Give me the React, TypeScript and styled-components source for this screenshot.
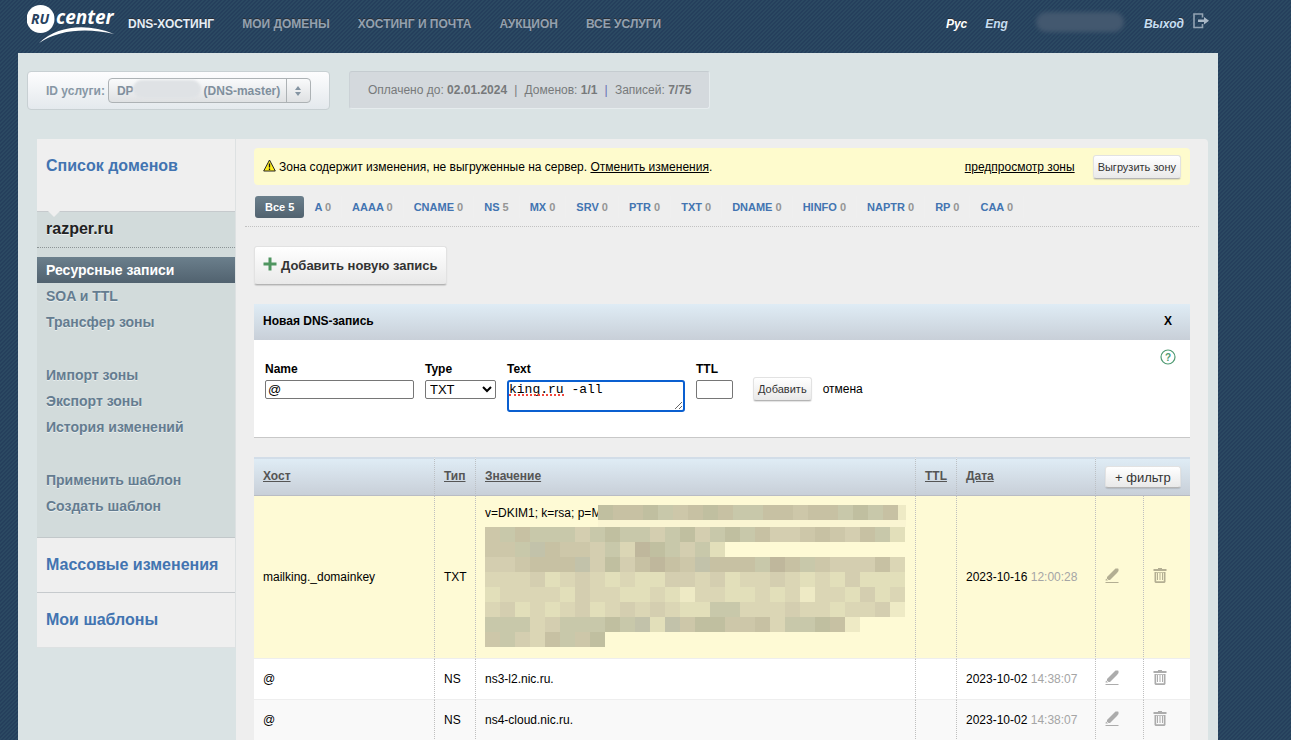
import React from "react";
import styled, { createGlobalStyle, css } from "styled-components";

const GlobalStyle = createGlobalStyle`
  * { box-sizing: border-box; }
  body {
    margin: 0;
    font: 12px/16px "Liberation Sans", Arial, sans-serif;
    color: #000;
    background-color: #27425f;
    background-image: linear-gradient(135deg, #253f5c 25%, #2b4962 25% 50%, #253f5c 50% 75%, #2b4962 75%);
    background-size: 4px 4px;
  }
  a { color: inherit; }
  button, input, select { font-family: inherit; }
`;

/* ---------- header ---------- */

const Shell = styled.div`
  margin: 0 73px 0 18px;
`;

const Header = styled.header`
  display: flex;
  height: 53px;
  padding: 0 8px 0 9px;
`;

const LogoLink = styled.a`
  display: block;
  width: 101px;
  height: 46px;
`;

const NavList = styled.nav`
  display: flex;
  gap: 28px;
  padding-top: 16px;
  flex: 1;
`;

const NavLink = styled.a<{ $active?: boolean }>`
  height: 16px;
  white-space: nowrap;
  font-weight: bold;
  text-decoration: none;
  text-shadow: 0 -1px 0 #2a2f36;
  color: ${(p) => (p.$active ? "#e4eef7" : "#93a1b0")};
`;

const UserBar = styled.div`
  display: flex;
  padding-top: 16px;
  font-style: italic;
`;

const UserLink = styled.a<{ $current?: boolean }>`
  height: 16px;
  margin-right: 18px;
  white-space: nowrap;
  font-weight: bold;
  text-decoration: none;
  text-shadow: 0 -1px 0 #2a2f36;
  color: ${(p) => (p.$current ? "#fff" : "#c5def2")};
`;

const HiddenLogin = styled.span`
  width: 88px;
  height: 20px;
  margin: -4px 20px 0 10px;
  border-radius: 10px;
  background: #43586f;
  filter: blur(2px);
`;

const ExitLink = styled.a`
  display: flex;
  height: 16px;
  gap: 9px;
  font-weight: bold;
  text-decoration: none;
  text-shadow: 0 -1px 0 #2a2f36;
  color: #c5def2;
  svg { margin-top: -3px; }
`;

/* ---------- service bar ---------- */

const Page = styled.div`
  min-height: calc(100vh - 53px);
  padding: 18px 10px 0 9px;
  background: #dae3e4;
`;

const ServiceBar = styled.div`
  display: flex;
  align-items: flex-start;
  gap: 19px;
  height: 68px;
`;

const ServiceBox = styled.div`
  display: flex;
  align-items: center;
  height: 39px;
  padding: 0 18px;
  border: 1px solid #c8d0d3;
  border-radius: 4px;
  background: linear-gradient(#fdfdfe, #e4e9ed);
`;

const ServiceLabel = styled.label`
  margin-right: 3px;
  font-weight: bold;
  color: #8797a5;
`;

const SelectFrame = styled.span`
  position: relative;
  display: block;
`;

const ServiceSelect = styled.select`
  display: block;
  appearance: none;
  width: 203px;
  height: 25px;
  padding: 0 26px 0 8px;
  border: 1px solid #adb2b5;
  border-radius: 4px;
  background: linear-gradient(#f9fafb, #dfe1e3);
  font-size: 12px;
  font-weight: bold;
  color: #7f8f9d;
`;

const SelectSmudge = styled.span`
  position: absolute;
  left: 25px;
  top: 2px;
  width: 68px;
  height: 18px;
  border-radius: 9px;
  background: #dfe2e5;
  filter: blur(1px);
  pointer-events: none;
`;

const SelectArrows = styled.svg`
  position: absolute;
  right: 1px;
  top: 1px;
  pointer-events: none;
`;

const ServiceInfo = styled.div`
  height: 38px;
  padding: 10px 18px;
  border: 1px solid #e6ecee;
  border-top-color: #c5ccd0;
  border-left-color: #cbd2d6;
  border-radius: 3px;
  background: #d4d9dd;
  color: #77797b;
  white-space: nowrap;
`;

const Divider = styled.span<{ $blue?: boolean }>`
  margin: 0 4px 0 7px;
  color: ${(p) => (p.$blue ? "#6a6cb4" : "#77797b")};
`;

/* ---------- sidebar ---------- */

const Columns = styled.div`
  display: flex;
  align-items: stretch;
`;

const Sidebar = styled.aside`
  flex: 0 0 199px;
  align-self: flex-start;
  margin-left: 10px;
  border: solid #dde1e2;
  border-width: 0 1px 1px 0;
`;

const SideTitle = styled.a<{ $tall?: boolean }>`
  position: relative;
  display: block;
  height: ${(p) => (p.$tall ? "73px" : "55px")};
  padding: 17px 9px;
  border-bottom: 1px solid #c6cacd;
  background: #efefef;
  font-size: 16px;
  line-height: 20px;
  font-weight: bold;
  text-decoration: none;
  white-space: nowrap;
  color: #4274b1;
  &:last-child { height: 54px; border-bottom: 0; }
`;

const Notch = styled.i`
  position: absolute;
  left: 11px;
  bottom: -6px;
  border: 6px solid transparent;
  border-top-color: #efefef;
  border-bottom: 0;
`;

const DomainBlock = styled.div`
  height: 326px;
  background: #d2dbdb;
  border-bottom: 1px solid #c2c8ca;
`;

const DomainName = styled.h2`
  height: 36px;
  margin: 0 0 9px;
  padding: 7px 9px;
  border-bottom: 1px dotted #8c9496;
  font-size: 16px;
  line-height: 20px;
  color: #222;
  text-shadow: 0 1px 0 #eef2f2;
`;

const MenuGroup = styled.ul`
  margin: 0 0 27px;
  padding: 0;
  list-style: none;
`;

const MenuLink = styled.a<{ $active?: boolean }>`
  display: block;
  height: 26px;
  padding: 0 9px;
  font-size: 14px;
  line-height: 26px;
  font-weight: bold;
  text-decoration: none;
  color: #647c90;
  text-shadow: 0 1px 0 #e8eeee;
  ${(p) =>
    p.$active &&
    css`
      color: #fff;
      text-shadow: none;
      background: linear-gradient(#6b7f8c, #51626f);
    `}
`;

/* ---------- content ---------- */

const Content = styled.main`
  flex: 1;
  min-width: 0;
  min-height: calc(100vh - 139px);
  padding-top: 9px;
  border-radius: 0 4px 0 0;
  background: #eee;
`;

const Inset = styled.div`
  margin: 0 18px;
`;

const RaisedButton = styled.button<{ $size: "small" | "filter" | "large" }>`
  display: inline-flex;
  align-items: center;
  justify-content: center;
  border: 1px solid #e2e2e2;
  border-bottom-color: #b4b4b4;
  border-radius: 3px;
  background: linear-gradient(#fff, #e9e9e9);
  box-shadow: 0 1px 1px rgba(0, 0, 0, 0.12);
  color: #333;
  white-space: nowrap;
  ${(p) =>
    p.$size === "small"
      ? css`height: 24px; padding: 0 4px; font-size: 11px;`
      : p.$size === "filter"
      ? css`height: 22px; padding: 0 9px; font-size: 13px;`
      : css`height: 39px; padding: 0 8px; gap: 4px; font-size: 13px; font-weight: bold;`}
`;

const Alert = styled.div`
  display: flex;
  align-items: center;
  height: 37px;
  padding: 0 9px;
  border-radius: 4px;
  background: #fefbcd;
  svg { margin: 0 3px 3px 0; }
`;

const PreviewLink = styled.a`
  margin: 0 18px 0 auto;
`;

const Tabs = styled.nav`
  display: flex;
  height: 42px;
  margin: 0 9px;
  padding: 11px 9px 0 10px;
  border-bottom: 1px dotted #c2c2c2;
`;

const Tab = styled.a<{ $active?: boolean }>`
  height: 22px;
  padding: 0 10px;
  border-right: 1px solid #efefef;
  font-size: 11px;
  line-height: 22px;
  font-weight: bold;
  text-decoration: none;
  white-space: nowrap;
  color: #4274b1;
  span { color: #959595; }
  ${(p) =>
    p.$active &&
    css`
      border: 0;
      border-radius: 3px;
      color: #fff;
      background: linear-gradient(#6b7f8c, #51626f);
      span { color: #fff; }
    `}
`;

const AddRow = styled.div`
  height: 77px;
  padding: 19px 0 0;
`;

const Card = styled.section`
  height: 134px;
  margin-bottom: 19px;
  background: #fff;
  border-bottom: 1px solid #c8c8c8;
`;

const CardHead = styled.header`
  display: flex;
  align-items: center;
  justify-content: space-between;
  height: 36px;
  padding: 0 18px 2px 9px;
  background: linear-gradient(#dfecf5, #c8cfd8);
  h3 { margin: 0; font-size: 12px; }
`;

const CloseButton = styled.button`
  padding: 0;
  border: 0;
  background: none;
  font-size: 12px;
  font-weight: bold;
`;

const RecordForm = styled.form`
  display: flex;
  align-items: flex-start;
  padding: 21px 14px 0 11px;
`;

const Field = styled.div<{ $width: number }>`
  position: relative;
  flex: 0 0 ${(p) => p.$width}px;
  margin-right: 11px;
  label { display: block; height: 19px; font-weight: bold; }
`;

const TextInput = styled.input`
  display: block;
  width: 100%;
  height: 19px;
  padding: 0 2px;
  border: 1px solid #767676;
  border-radius: 2px;
  font-size: 13px;
`;

const TypeSelect = styled.select`
  display: block;
  width: 100%;
  height: 19px;
  padding: 0;
  border: 1px solid #767676;
  border-radius: 2px;
  background: #fff;
  font-size: 13px;
  color: #000;
`;

const TextArea = styled.textarea`
  display: block;
  width: 100%;
  height: 32px;
  padding: 0;
  border: 2px solid #0a5fd0;
  border-radius: 3px;
  outline: none;
  font: 13px/15px "Liberation Mono", monospace;
`;

const SpellingMark = styled.i`
  position: absolute;
  left: 2px;
  top: 33px;
  width: 55px;
  border-bottom: 2px dotted #f0463c;
  pointer-events: none;
`;

const FormActions = styled.div`
  display: flex;
  align-items: center;
  gap: 11px;
  margin: 16px 0 0 9px;
  a { text-decoration: none; }
`;

const HelpLink = styled.a`
  display: block;
  height: 16px;
  margin: -12px 0 0 auto;
`;

/* ---------- records table ---------- */

const Records = styled.table`
  width: 100%;
  table-layout: fixed;
  border-collapse: separate;
  border-spacing: 0;
`;

const HeadCell = styled.th`
  height: 39px;
  padding: 0 9px 3px;
  border-top: 2px solid #d2dde8;
  border-right: 1px dotted #bcc0c4;
  border-bottom: 1px solid #b9bcc4;
  background: linear-gradient(#dfecf5, #c8cfd8);
  text-align: left;
  color: #555;
  &:last-child { border-right: 0; vertical-align: bottom; padding-bottom: 7px; line-height: 0; }
`;

const Row = styled.tr<{ $tone: "changed" | "plain" | "alt" }>`
  background: ${(p) => ({ changed: "#fefad5", plain: "#fff", alt: "#f9f9f9" }[p.$tone])};
`;

const Cell = styled.td`
  height: 41px;
  padding: 0 9px;
  border-right: 1px dotted #bfbfbf;
  border-bottom: 1px solid #eee;
  &:last-child { border-right: 0; }
`;

const ValueCell = styled(Cell)`
  padding: 9px 9px 11px;
`;

const ValueLine = styled.div`
  display: flex;
  height: 22px;
  svg { position: relative; flex: none; }
`;

const KeyStart = styled.span`
  width: 113px;
  flex: none;
  white-space: nowrap;
`;

const Mosaic = styled.svg`
  display: block;
`;

const Time = styled.span`
  color: #a5a5a5;
`;

const IconButton = styled.button<{ $tone: string }>`
  display: block;
  padding: 0 0 3px;
  border: 0;
  background: none;
  color: ${(p) => (p.$tone === "changed" ? "#b3ae93" : "#acacac")};
  svg { display: block; }
`;

/* ---------- drawings ---------- */

const Logo = () => (
  <svg width="90" height="46" viewBox="0 0 90 46" role="img" aria-label="RU center">
    <circle cx="13.500" cy="19" r="14" fill="#fff" />
    <text x="4" y="24" fontFamily="Open Sans, sans-serif" fontSize="14" fontWeight="700" fontStyle="italic" fill="#27425f">RU</text>
    <text x="29" y="24" fontFamily="Open Sans, sans-serif" fontSize="19" fontWeight="700" fontStyle="italic" fill="#fff">center</text>
    <path d="M12 43C31 25 61 23 87 34C61 28 33 29 12 43Z" fill="#fff" />
  </svg>
);

const ExitIcon = () => (
  <svg width="17" height="16" viewBox="0 0 17 16" fill="none">
    <path d="M9.500 4.500V1H1V14.500H9.500V11" stroke="#93a3b3" strokeWidth="1.600" />
    <path d="M5 6.500H11V4L16 7.800L11 11.500V9H5Z" fill="#a9b8c6" />
  </svg>
);

const WarningIcon = () => (
  <svg width="13" height="13" viewBox="0 0 13 13">
    <path d="M6.500 1L12.300 12H0.700Z" fill="#ffee1c" stroke="#222" strokeLinejoin="round" />
    <path d="M6.500 4.500V8.500M6.500 9.500V11" stroke="#111" strokeWidth="1.300" />
  </svg>
);

const PlusIcon = () => (
  <svg width="14" height="18" viewBox="0 0 14 18">
    <path d="M5.500 0.500H8.500V5.500H13.500V8.500H8.500V13.500H5.500V8.500H0.500V5.500H5.500Z" fill="#4f9560" />
  </svg>
);

const HelpIcon = () => (
  <svg width="16" height="16" viewBox="0 0 16 16">
    <circle cx="8" cy="8" r="7" fill="none" stroke="#4f9a72" strokeWidth="1.200" />
    <text x="8" y="11.500" textAnchor="middle" fontSize="10" fontWeight="700" fill="#4f9a72">?</text>
  </svg>
);

const PencilIcon = () => (
  <svg width="14" height="16" viewBox="0 0 14 16" fill="currentColor">
    <path d="M0.500 14H13.500V15H0.500Z" />
    <path d="M10.500 0.500H13L13.500 1V3L12 5L5 12H3.500L2 10.500V9L9 2Z" />
    <path d="M1 10.500L3 12.500H0.500Z" />
  </svg>
);

const TrashIcon = () => (
  <svg width="14" height="16" viewBox="0 0 14 16" fill="currentColor">
    <path d="M5 0H9V1H13.500V3H0.500V1H5Z" />
    <path fillRule="evenodd" d="M1.500 4H12.500V14L11.500 15H2.500L1.500 14ZM3.200 4.800V13.200H10.800V4.800Z" />
    <path d="M4 5H5V12H4ZM6.500 5H7.500V12H6.500ZM9 5H10V12H9Z" />
  </svg>
);

const shades: Record<string, string> = {
  a: "#cdc7a9",
  b: "#c8c8aa",
  c: "#c7c1a3",
  d: "#c0bfa0",
  e: "#d4ceb0",
  f: "#dbd6b5",
  g: "#e2dfba",
  h: "#bfb79c",
  i: "#eeeac5",
  j: "#c2c2aa",
};

const keyFirstLine = "dccdbacdcbbccaccbdbc";

const keyLines = [
  "abcbbbebdbbebdebdbceeacaecbg",
  "aabjcaaebfhdbebg",
  "eeacccjedechcajcccbhcbaeeecf",
  "fffegfefgfggeefegffefgfgeggg",
  "gffffgeffggfgiffggfgfiffgegf",
  "fegfgfegfefefggbbfffeffgffei",
  "bbbfebbbdbjgjaddaacfbbdci",
  "abefcbad",
];

const cells = (line: string, row: number) =>
  line.split("").map((c, i) => (
    <rect key={`${row}-${i}`} x={i * 15} y={row * 15} width="15" height="15" fill={shades[c]} />
  ));

const BlurredKey = () => (
  <>
    <ValueLine>
      <KeyStart>v=DKIM1; k=rsa; p=M</KeyStart>
      <Mosaic width="308" height="22" shapeRendering="crispEdges" aria-hidden="true">
        <rect width="308" height="22" fill="#faf5d2" />
        {cells(keyFirstLine, 0)}
        <rect x="300" width="8" height="15" fill={shades.i} />
      </Mosaic>
    </ValueLine>
    <Mosaic width="420" height="120" shapeRendering="crispEdges" aria-hidden="true">
      {keyLines.map((line, row) => cells(line, row))}
    </Mosaic>
  </>
);

/* ---------- data ---------- */

const navItems = ["DNS-ХОСТИНГ", "МОИ ДОМЕНЫ", "ХОСТИНГ И ПОЧТА", "АУКЦИОН", "ВСЕ УСЛУГИ"];

const menuGroups = [
  ["Ресурсные записи", "SOA и TTL", "Трансфер зоны"],
  ["Импорт зоны", "Экспорт зоны", "История изменений"],
  ["Применить шаблон", "Создать шаблон"],
];

const tabs: [string, number][] = [
  ["Все", 5], ["A", 0], ["AAAA", 0], ["CNAME", 0], ["NS", 5], ["MX", 0], ["SRV", 0],
  ["PTR", 0], ["TXT", 0], ["DNAME", 0], ["HINFO", 0], ["NAPTR", 0], ["RP", 0], ["CAA", 0],
];

type Rec = {
  host: string;
  type: string;
  value: React.ReactNode;
  date: string;
  time: string;
  tone: "changed" | "plain" | "alt";
};

const records: Rec[] = [
  { host: "mailking._domainkey", type: "TXT", value: <BlurredKey />, date: "2023-10-16", time: "12:00:28", tone: "changed" },
  { host: "@", type: "NS", value: "ns3-l2.nic.ru.", date: "2023-10-02", time: "14:38:07", tone: "plain" },
  { host: "@", type: "NS", value: "ns4-cloud.nic.ru.", date: "2023-10-02", time: "14:38:07", tone: "alt" },
];

export default function App() {
  return (
    <>
      <GlobalStyle />
      <Shell>
        <Header>
          <LogoLink href="#"><Logo /></LogoLink>
          <NavList>
            {navItems.map((item, i) => (
              <NavLink key={item} href="#" $active={i === 0}>{item}</NavLink>
            ))}
          </NavList>
          <UserBar>
            <UserLink href="#" $current>Рус</UserLink>
            <UserLink href="#">Eng</UserLink>
            <HiddenLogin />
            <ExitLink href="#">Выход <ExitIcon /></ExitLink>
          </UserBar>
        </Header>

        <Page>
          <ServiceBar>
            <ServiceBox>
              <ServiceLabel htmlFor="service">ID услуги:</ServiceLabel>
              <SelectFrame>
                <ServiceSelect id="service">
                  <option>{`DP${"\u00a0".repeat(21)}(DNS-master)`}</option>
                </ServiceSelect>
                <SelectSmudge />
                <SelectArrows width="24" height="23" viewBox="0 0 24 23">
                  <path d="M0.500 0V23" stroke="#adb2b5" />
                  <path d="M12 7L15 11H9ZM12 17L15 13H9Z" fill="#8494a2" />
                </SelectArrows>
              </SelectFrame>
            </ServiceBox>
            <ServiceInfo>
              Оплачено до: <b>02.01.2024</b><Divider>|</Divider> Доменов: <b>1/1</b>
              <Divider $blue>|</Divider> Записей: <b>7/75</b>
            </ServiceInfo>
          </ServiceBar>

          <Columns>
            <Sidebar>
              <SideTitle href="#" $tall>Список доменов<Notch /></SideTitle>
              <DomainBlock>
                <DomainName>razper.ru</DomainName>
                {menuGroups.map((group, g) => (
                  <MenuGroup key={g}>
                    {group.map((item, i) => (
                      <li key={item}>
                        <MenuLink href="#" $active={g === 0 && i === 0}>{item}</MenuLink>
                      </li>
                    ))}
                  </MenuGroup>
                ))}
              </DomainBlock>
              <SideTitle href="#">Массовые изменения</SideTitle>
              <SideTitle href="#">Мои шаблоны</SideTitle>
            </Sidebar>

            <Content>
              <Inset>
                <Alert>
                  <WarningIcon />
                  <span>Зона содержит изменения, не выгруженные на сервер. <a href="#">Отменить изменения</a>.</span>
                  <PreviewLink href="#">предпросмотр зоны</PreviewLink>
                  <RaisedButton type="button" $size="small">Выгрузить зону</RaisedButton>
                </Alert>
              </Inset>

              <Tabs>
                {tabs.map(([name, count], i) => (
                  <Tab key={name} href="#" $active={i === 0}>{name} <span>{count}</span></Tab>
                ))}
              </Tabs>

              <Inset>
                <AddRow>
                  <RaisedButton type="button" $size="large"><PlusIcon />Добавить новую запись</RaisedButton>
                </AddRow>

                <Card>
                  <CardHead>
                    <h3>Новая DNS-запись</h3>
                    <CloseButton type="button">X</CloseButton>
                  </CardHead>
                  <RecordForm>
                    <Field $width={149}>
                      <label htmlFor="name">Name</label>
                      <TextInput id="name" defaultValue="@" />
                    </Field>
                    <Field $width={71}>
                      <label htmlFor="type">Type</label>
                      <TypeSelect id="type"><option>TXT</option></TypeSelect>
                    </Field>
                    <Field $width={178}>
                      <label htmlFor="text">Text</label>
                      <TextArea id="text" defaultValue="king.ru -all" />
                      <SpellingMark />
                    </Field>
                    <Field $width={37}>
                      <label htmlFor="ttl">TTL</label>
                      <TextInput id="ttl" />
                    </Field>
                    <FormActions>
                      <RaisedButton type="button" $size="small">Добавить</RaisedButton>
                      <a href="#">отмена</a>
                    </FormActions>
                    <HelpLink href="#" aria-label="Справка"><HelpIcon /></HelpLink>
                  </RecordForm>
                </Card>

                <Records>
                  <colgroup>
                    <col width="181" />
                    <col width="41" />
                    <col />
                    <col width="41" />
                    <col width="139" />
                    <col width="48" />
                    <col width="46" />
                  </colgroup>
                  <thead>
                    <tr>
                      {["Хост", "Тип", "Значение", "TTL", "Дата"].map((title) => (
                        <HeadCell key={title}><a href="#">{title}</a></HeadCell>
                      ))}
                      <HeadCell colSpan={2}>
                        <RaisedButton type="button" $size="filter">+ фильтр</RaisedButton>
                      </HeadCell>
                    </tr>
                  </thead>
                  <tbody>
                    {records.map((r, i) => {
                      const ValueBox = r.tone === "changed" ? ValueCell : Cell;
                      return (
                        <Row key={i} $tone={r.tone}>
                          <Cell>{r.host}</Cell>
                          <Cell>{r.type}</Cell>
                          <ValueBox>{r.value}</ValueBox>
                          <Cell />
                          <Cell>{r.date} <Time>{r.time}</Time></Cell>
                          <Cell>
                            <IconButton type="button" $tone={r.tone} aria-label="Изменить"><PencilIcon /></IconButton>
                          </Cell>
                          <Cell>
                            <IconButton type="button" $tone={r.tone} aria-label="Удалить"><TrashIcon /></IconButton>
                          </Cell>
                        </Row>
                      );
                    })}
                  </tbody>
                </Records>
              </Inset>
            </Content>
          </Columns>
        </Page>
      </Shell>
    </>
  );
}
